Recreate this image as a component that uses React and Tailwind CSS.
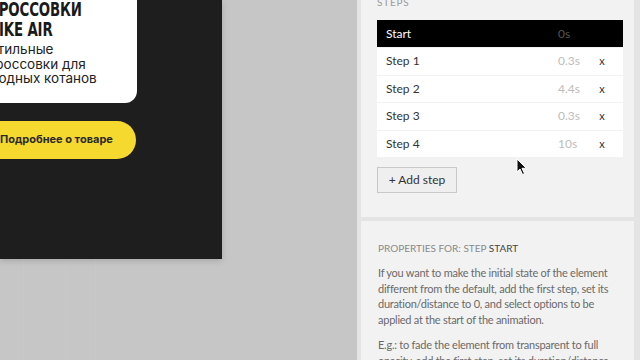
import { useState } from "react";

const steps = [
  { name: "Step 1", time: "0.3s" },
  { name: "Step 2", time: "4.4s" },
  { name: "Step 3", time: "0.3s" },
  { name: "Step 4", time: "10s" },
];

function Cursor() {
  return (
    <svg className="pointer-events-none absolute left-[516px] top-[158px]" width="12" height="18" viewBox="0 0 12 18">
      <path d="M1 1 L1 14 L4 11 L6.5 16.5 L8.5 15.5 L6 10.3 L10.3 10.3 Z" fill="#111" stroke="#fff" strokeWidth="1" strokeLinejoin="round" />
    </svg>
  );
}

function ProductCard() {
  return (
    <div className="relative flow-root h-[259px] w-[222px] shrink-0 bg-[#1e1e1e] shadow-[0_2px_6px_rgba(0,0,0,0.15)]">
      <div className="-ml-[14px] -mt-[7px] w-[151px] rounded-br-[12px] bg-white pb-[17px] pl-[2px] pt-[6px]">
        <h2 className="origin-left scale-x-[0.78] whitespace-nowrap text-[19px] font-bold uppercase leading-[20px] tracking-[-0.2px] text-[#1a1a1a] [font-family:'Liberation_Sans_Narrow','DejaVu_Sans_Condensed',sans-serif]">
          Кроссовки
          <br />
          Nike Air
        </h2>
        <p className="mt-[3px] whitespace-nowrap text-[13.5px] leading-[14.5px] text-[#222] [font-family:Inter,sans-serif]">
          Стильные
          <br />
          кроссовки для
          <br />
          модных котанов
        </p>
      </div>
      <div className="-ml-[14px] mt-[18px] flex h-[38px] w-[150px] items-center rounded-r-full bg-[#f6d92e] pl-[14px] text-[11px] font-bold text-[#2a2a2a] [font-family:Inter,sans-serif]">
        Подробнее о товаре
      </div>
    </div>
  );
}

export default function App() {
  const [active] = useState("Start");

  return (
    <div className="relative flex h-[360px] w-[640px] overflow-hidden bg-[#c6c6c6] [font-family:Lato,sans-serif]">
      {/* faint layout guides */}
      <div className="pointer-events-none absolute inset-y-0 left-[23px] w-px bg-white/[0.04]" />
      <div className="pointer-events-none absolute inset-y-0 left-[65px] w-px bg-white/[0.04]" />
      <div className="pointer-events-none absolute inset-y-0 left-[95px] w-px bg-white/[0.04]" />
      <div className="pointer-events-none absolute left-[138px] top-0 h-[259px] w-px bg-white/[0.04]" />

      <div className="w-[357px] shrink-0">
        <ProductCard />
      </div>

      <div className="flex flex-1 flex-col gap-[4px] bg-[#e4e4e4] pl-[4px] pr-[6px]">
        {/* Steps panel */}
        <div className="flow-root h-[217px] shrink-0 bg-[#f2f2f2] pl-[16px] pr-[11px]">
          <p className="-mt-[5px] text-[10px] uppercase tracking-[0.8px] text-[#9a9a9a]">Steps</p>
          <div className="mt-[10px] flex flex-col gap-px text-[12px]">
            <div className="flex h-[27px] items-center bg-black pl-[9px] pr-[9px]">
              <span className="flex-1 text-white">{active}</span>
              <span className="w-[56px] text-[#555]">0s</span>
            </div>
            {steps.map((s) => (
              <div key={s.name} className="flex h-[26.5px] items-center bg-white pl-[9px] pr-[9px]">
                <span className="flex-1 text-[#333]">{s.name}</span>
                <span className="w-[32px] text-[#bdbdbd]">{s.time}</span>
                <span className="w-[24px] text-center text-[11px] text-[#333]">x</span>
              </div>
            ))}
          </div>
          <button className="mt-[10px] h-[26px] w-[80px] border border-[#c8c8c8] bg-[#efefef] text-[12px] text-[#333]">
            + Add step
          </button>
        </div>

        {/* Properties panel */}
        <div className="flex-1 bg-[#f2f2f2] pl-[17px] pr-[12px] pt-[20px]">
          <p className="text-[10px] uppercase text-[#8a8a8a]">
            Properties for: step <span className="text-[#444]">Start</span>
          </p>
          <p className="mt-[9px] whitespace-nowrap text-[11px] leading-[15.5px] tracking-[-0.25px] text-[#6a6a6a]">
            If you want to make the initial state of the element
            <br />
            different from the default, add the first step, set its
            <br />
            duration/distance to 0, and select options to be
            <br />
            applied at the start of the animation.
          </p>
          <p className="mt-[10px] whitespace-nowrap text-[11px] leading-[15.5px] tracking-[-0.25px] text-[#6a6a6a]">
            E.g.: to fade the element from transparent to full
            <br />
            opacity, add the first step, set its duration/distance
          </p>
        </div>
      </div>

      <Cursor />
    </div>
  );
}
